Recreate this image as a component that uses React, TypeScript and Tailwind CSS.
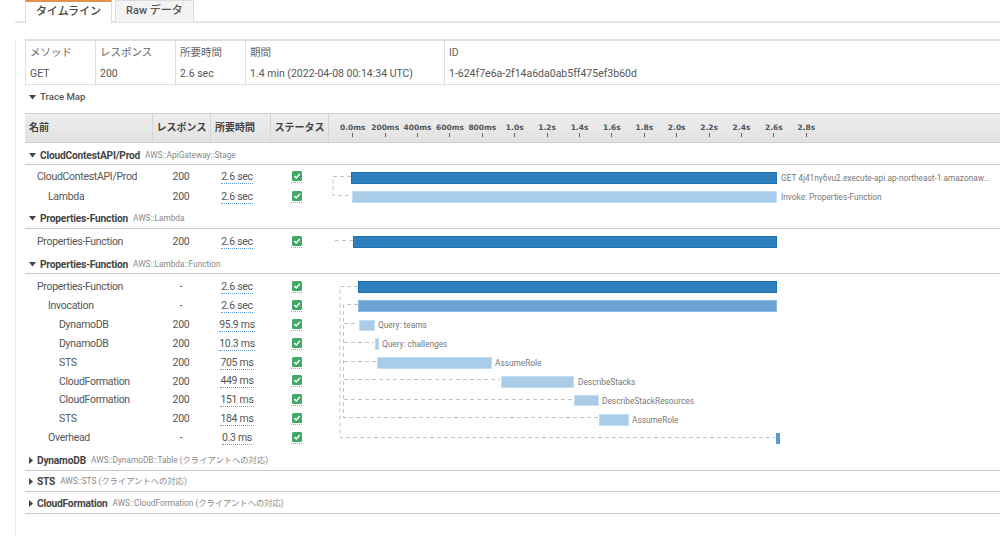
import React from "react";

const jpFont = "font-['Roboto','Noto_Sans_CJK_JP',sans-serif]";

const ticks = ["0.0ms", "200ms", "400ms", "600ms", "800ms", "1.0s", "1.2s", "1.4s", "1.6s", "1.8s", "2.0s", "2.2s", "2.4s", "2.6s", "2.8s"];

type Row = { name: string; indent: number; resp: string; dur: string };

const sec1: Row[] = [
  { name: "CloudContestAPI/Prod", indent: 0, resp: "200", dur: "2.6 sec" },
  { name: "Lambda", indent: 1, resp: "200", dur: "2.6 sec" },
];
const sec2: Row[] = [{ name: "Properties-Function", indent: 0, resp: "200", dur: "2.6 sec" }];
const sec3: Row[] = [
  { name: "Properties-Function", indent: 0, resp: "-", dur: "2.6 sec" },
  { name: "Invocation", indent: 1, resp: "-", dur: "2.6 sec" },
  { name: "DynamoDB", indent: 2, resp: "200", dur: "95.9 ms" },
  { name: "DynamoDB", indent: 2, resp: "200", dur: "10.3 ms" },
  { name: "STS", indent: 2, resp: "200", dur: "705 ms" },
  { name: "CloudFormation", indent: 2, resp: "200", dur: "449 ms" },
  { name: "CloudFormation", indent: 2, resp: "200", dur: "151 ms" },
  { name: "STS", indent: 2, resp: "200", dur: "184 ms" },
  { name: "Overhead", indent: 1, resp: "-", dur: "0.3 ms" },
];

const indents = ["pl-[12px]", "pl-[23px]", "pl-[34px]"];

function Check() {
  return (
    <span className="flex h-[12px] w-[11px] border-b border-dotted border-[#7cc08f]">
      <svg width="10" height="10" viewBox="0 0 10 10" className="ml-[0.5px]">
        <rect width="10" height="10" rx="1.5" fill="#41a866" />
        <path d="M2.4 5.1 L4.3 7 L7.8 3.1" fill="none" stroke="#fff" strokeWidth="1.5" />
      </svg>
    </span>
  );
}

function Rows({ rows, h }: { rows: Row[]; h: string }) {
  return (
    <div className="w-[303px] shrink-0">
      {rows.map((r, i) => (
        <div key={i} className={`flex items-center text-[10.5px] tracking-[-0.3px] text-[#555] ${h}`}>
          <div className={`w-[127px] ${indents[r.indent]}`}>{r.name}</div>
          <div className="w-[58px] text-center">{r.resp}</div>
          <div className="flex w-[54px] justify-center">
            <span className="border-b border-dotted border-[#5aa0dc] leading-[13px]">{r.dur}</span>
          </div>
          <div className="w-[64px] pl-[27px]">
            <Check />
          </div>
        </div>
      ))}
    </div>
  );
}

function Bar({ x, y, w, h, fill, edge }: { x: number; y: number; w: number; h: number; fill: string; edge: string }) {
  return <rect x={x + 0.5} y={y + 0.5} width={w - 1} height={h - 1} fill={fill} stroke={edge} strokeWidth="1" />;
}

function Label({ x, y, children }: { x: number; y: number; children: string }) {
  return (
    <text x={x} y={y} fontSize="8.3" fill="#777" fontFamily="Roboto, sans-serif">
      {children}
    </text>
  );
}

function Dash({ d }: { d: string }) {
  return <path d={d} fill="none" stroke="#c4c4c4" strokeWidth="1" strokeDasharray="4 3" />;
}

const dark = "#2e80bd";
const darkEdge = "#1f6fb3";
const light = "#a9cde9";
const lightEdge = "#c5ddf1";

// chart coords: x = page x - 328, y = page y - section top
function Chart1() {
  return (
    <svg width="672" height="42" className="block">
      <Dash d="M23 11.5 H5 V30.5 H24" />
      <Bar x={23} y={7} w={426} h={12} fill={dark} edge={darkEdge} />
      <Bar x={24} y={26} w={425} h={12} fill={light} edge={lightEdge} />
      <Label x={453} y={16}>GET 4j41ny6vu2.execute-api.ap-northeast-1.amazonaw...</Label>
      <Label x={453} y={35}>Invoke: Properties-Function</Label>
    </svg>
  );
}

function Chart2() {
  return (
    <svg width="672" height="26" className="block">
      <Dash d="M7 11.5 H25" />
      <Bar x={25} y={7} w={424} h={12} fill={dark} edge={darkEdge} />
    </svg>
  );
}

function Chart3() {
  return (
    <svg width="672" height="176" className="block">
      <Dash d="M30 12.5 H12 V163.5 H447" />
      <Dash d="M30 30.5 H15.5 V143.5 H270 M16 49.5 H30 M16 68.5 H46 M16 87.5 H49 M16 105.5 H172 M16 125.5 H246" />
      <Bar x={30} y={7} w={419} h={12} fill={dark} edge={darkEdge} />
      <Bar x={30} y={26} w={419} h={12} fill="#6ba4d4" edge="#8dbadf" />
      <Bar x={31} y={46} w={16} h={11} fill={light} edge={lightEdge} />
      <Label x={50} y={54}>Query: teams</Label>
      <Bar x={47} y={64} w={4} h={12} fill={light} edge={lightEdge} />
      <Label x={54} y={73}>Query: challenges</Label>
      <Bar x={49} y={83} w={115} h={12} fill={light} edge={lightEdge} />
      <Label x={167} y={92}>AssumeRole</Label>
      <Bar x={173} y={102} w={73} h={12} fill={light} edge={lightEdge} />
      <Label x={250} y={111}>DescribeStacks</Label>
      <Bar x={246} y={121} w={25} h={11} fill={light} edge={lightEdge} />
      <Label x={274} y={130}>DescribeStackResources</Label>
      <Bar x={271} y={140} w={30} h={12} fill={light} edge={lightEdge} />
      <Label x={304} y={149}>AssumeRole</Label>
      <Bar x={448} y={159} w={4} h={11} fill="#5a9ccf" edge="#5a9ccf" />
    </svg>
  );
}

function SectionHead({ open, title, kind, cls }: { open: boolean; title: string; kind: string; cls: string }) {
  return (
    <div className={`flex items-end border-b border-[#c8c8c8] pl-[4px] ${cls}`}>
      <div className="flex h-[13px] items-center">
        {open ? (
          <svg width="7" height="5" viewBox="0 0 7 5" className="mr-[4px]">
            <path d="M0 0 H7 L3.5 4.5 Z" fill="#444" />
          </svg>
        ) : (
          <svg width="4" height="7" viewBox="0 0 4 7" className="mr-[4px]">
            <path d="M0 0 L4 3.5 L0 7 Z" fill="#444" />
          </svg>
        )}
        <span className="mr-[5px] text-[10.2px] font-bold tracking-[-0.2px] text-[#444]">{title}</span>
        <span className="text-[8.3px] text-[#888]">{kind}</span>
      </div>
    </div>
  );
}

export default function App() {
  return (
    <div className={`h-[536px] w-[1000px] overflow-hidden bg-white pl-[15px] ${jpFont}`}>
      <div className="flex h-[23px] border-b-2 border-[#e4e4e4] pl-[10px]">
        <div className="h-[23px] w-[87px] border-x border-t-2 border-x-[#ddd] border-t-[#e0914a] bg-white pt-[1px] text-center text-[11px] font-medium leading-[17px] text-[#444]">
          タイムライン
        </div>
        <div className="ml-[3px] h-[22px] w-[79px] border-x border-t border-[#ddd] bg-[#f3f3f3] text-center text-[11px] font-medium leading-[19px] text-[#555]">
          Raw データ
        </div>
      </div>

      <div className="h-[513px] border-l border-[#e8e8e8] pl-[9px]">
        <div className="mt-[16px] flex h-[46px] border-y border-t-2 border-[#dfdfdf] text-[10.5px] text-[#555]">
          {[
            ["w-[70px] border-l", "メソッド", "GET"],
            ["w-[80px] border-l", "レスポンス", "200"],
            ["w-[70px] border-l", "所要時間", "2.6 sec"],
            ["w-[199px] border-l", "期間", "1.4 min (2022-04-08 00:14:34 UTC)"],
            ["flex-1 border-l", "ID", "1-624f7e6a-2f14a6da0ab5ff475ef3b60d"],
          ].map(([cls, head, val]) => (
            <div key={head} className={`${cls} border-[#dfdfdf] pl-[4px]`}>
              <div className="pt-[3px] text-[10.5px] leading-[18px] text-[#666]">{head}</div>
              <div className="pt-[4px] leading-[16px]">{val}</div>
            </div>
          ))}
        </div>

        <div className="flex h-[24px] items-center gap-[4px] pl-[4px] text-[9.6px] font-medium text-[#555]">
          <svg width="7" height="5" viewBox="0 0 7 5">
            <path d="M0 0 H7 L3.5 4.5 Z" fill="#444" />
          </svg>
          <span>Trace Map</span>
        </div>

        <div className="mt-[4px] flex h-[30px] items-stretch border-y border-[#cfcfcf] bg-gradient-to-b from-[#ededed] to-[#e2e2e2] text-[10px] font-bold text-[#444]">
          <div className="flex w-[127px] items-center pb-[2px] pl-[4px]">名前</div>
          <div className="flex w-[58px] items-center justify-center border-l border-[#d4d4d4] pb-[2px]">レスポンス</div>
          <div className="flex w-[60px] items-center border-l border-[#d4d4d4] pb-[2px] pl-[4px]">所要時間</div>
          <div className="flex w-[58px] items-center justify-center border-l border-[#d4d4d4] pb-[2px]">ステータス</div>
          <div className="flex flex-1 border-l border-[#d4d4d4] pl-[7.6px] pt-[9px]">
            {ticks.map((t) => (
              <div key={t} className="flex w-[32.4px] shrink-0 flex-col items-center">
                <span className="font-['DejaVu_Sans',sans-serif] text-[7.5px] leading-[10px] text-[#555]">{t}</span>
                <span className="h-[4px] w-[1px] bg-[#666]" />
              </div>
            ))}
          </div>
        </div>

        <SectionHead open title="CloudContestAPI/Prod" kind="AWS::ApiGateway::Stage" cls="h-[22px] pb-[2px]" />
        <div className="flex">
          <div className="shrink-0 pt-[2px]">
            <Rows rows={sec1} h="h-[20px]" />
          </div>
          <Chart1 />
        </div>
        <SectionHead open title="Properties-Function" kind="AWS::Lambda" cls="h-[22px] pb-[3px]" />
        <div className="flex">
          <div className="shrink-0 pt-[1px]">
            <Rows rows={sec2} h="h-[24px]" />
          </div>
          <Chart2 />
        </div>
        <SectionHead open title="Properties-Function" kind="AWS::Lambda::Function" cls="h-[19px] pb-[2px]" />
        <div className="flex">
          <div className="shrink-0 pt-[3.5px]">
            <Rows rows={sec3} h="h-[18.9px]" />
          </div>
          <Chart3 />
        </div>
        <SectionHead open={false} title="DynamoDB" kind="AWS::DynamoDB::Table (クライアントへの対応)" cls="h-[21px] pb-[3px]" />
        <SectionHead open={false} title="STS" kind="AWS::STS (クライアントへの対応)" cls="h-[21px] pb-[3px]" />
        <SectionHead open={false} title="CloudFormation" kind="AWS::CloudFormation (クライアントへの対応)" cls="h-[22px] pb-[3px]" />
      </div>
    </div>
  );
}
